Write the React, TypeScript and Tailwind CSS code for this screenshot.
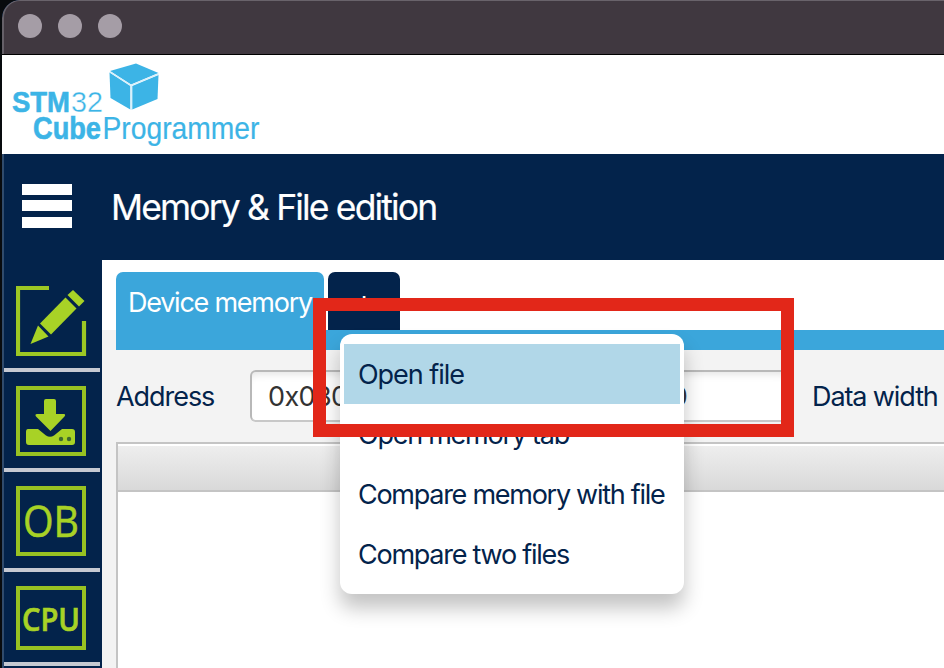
import React from "react";

const GREEN = "#a8d226";

function Frame({ children, height = 70 }: { children: React.ReactNode; height?: number }) {
  return (
    <svg width={70} height={height} viewBox={`0 0 70 ${height}`} className="block">
      <rect x={2} y={2} width={66} height={height - 4} fill="none" stroke="#98c222" strokeWidth={4} />
      {children}
    </svg>
  );
}

function EditIcon() {
  return (
    <svg width={72} height={70} viewBox="0 0 72 70" className="block">
      <path d="M33 2H2V68H68V35" fill="none" stroke="#9dc824" strokeWidth={4.2} />
      <path d="M57 4l11.5 11-5.5 5.5L51.500 9z" fill={GREEN} />
      <path d="M49.500 11.500L60.500 22.500 35 48.500 24 37.500z" fill={GREEN} />
      <path d="M22 39.500L32.500 50.500 14.500 58z" fill={GREEN} />
    </svg>
  );
}

function DownloadIcon() {
  return (
    <Frame>
      <path d="M30 13H38Q40 13 40 15V28H48Q50 28.500 48.500 30.500L34.500 45 20 30.500Q18.500 28 21 28H28V15Q28 13 30 13z" fill={GREEN} />
      <path d="M12 43H22L30 49.500Q34 52 38 49.500L46 43H56Q59 43 59 46V56Q59 59 56 59H13Q10 59 10 56V46Q10 43 12 43z" fill={GREEN} />
      <circle cx={45} cy={53} r={2.200} fill="#3f6a30" />
      <circle cx={53} cy={53} r={2.200} fill="#3f6a30" />
    </Frame>
  );
}

function Logo() {
  return (
    <svg width={262} height={98} viewBox="0 56 262 98" className="block">
      <g fill="#3cb4e6">
        <path d="M136 63.500L158.500 73 131 84.500 110 71z" />
        <path d="M109.500 72.500L130.300 86V109.500L110.500 98z" />
        <path d="M132.300 86L158.500 75 157.500 99 132.300 109.500z" />
      </g>
      <path d="M110 71.800L131 85.300 158.500 74M131.300 85V110" fill="none" stroke="#d9f0fb" strokeWidth={1.4} />
      <g fill="#3cb4e6" fontFamily="Liberation Sans, Arial, sans-serif">
        <text x={12} y={111.500} fontSize={29.500} fontWeight={700} textLength={58} lengthAdjust="spacingAndGlyphs" stroke="#3cb4e6" strokeWidth={0.6}>STM</text>
        <text x={71} y={111.500} fontSize={30} textLength={32} lengthAdjust="spacingAndGlyphs" stroke="#fff" strokeWidth={0.4}>32</text>
        <text x={33} y={139} fontSize={31} fontWeight={700} textLength={68} lengthAdjust="spacingAndGlyphs" stroke="#3cb4e6" strokeWidth={0.6}>Cube</text>
        <text x={102.500} y={139} fontSize={31.500} textLength={157} lengthAdjust="spacingAndGlyphs" stroke="#3cb4e6" strokeWidth={0.2}>Programmer</text>
      </g>
    </svg>
  );
}

function NavItem({ children, last = false }: { children: React.ReactNode; last?: boolean }) {
  return (
    <div className={`${last ? "h-[94px]" : "h-[100px]"} w-[96px] border-b-4 border-[#c5c9d2] pl-3 pt-[14px]`}>
      {children}
    </div>
  );
}

function Field({ value, className }: { value: string; className: string }) {
  return (
    <div
      className={`flex h-[52px] shrink-0 items-center rounded-[6px] border-2 border-[#b8b8b8] border-b-[#c8c8c8] bg-white pt-[2px] text-[#333] shadow-[inset_0_8px_8px_-6px_rgba(0,0,0,0.12)] ${className}`}
    >
      {value}
    </div>
  );
}

function MenuItem({ label, active = false, tracking }: { label: string; active?: boolean; tracking: string }) {
  return (
    <div className={`flex h-[60px] items-center whitespace-nowrap pl-[14px] pt-[2px] ${active ? "bg-[#b1d7e8]" : ""} ${tracking}`}>
      {label}
    </div>
  );
}

export default function App() {
  return (
    <div className="relative h-[668px] w-[944px] overflow-hidden bg-[#080b0e] pl-[2px] font-['Inter','Liberation_Sans',sans-serif] text-[27px] text-[#03234b]">
      <div className="flex h-full w-[942px] flex-col overflow-hidden rounded-tl-[18px] bg-[#03234b]">
        <header className="flex h-[54px] shrink-0 items-start gap-4 rounded-tl-[18px] border-l-2 border-t border-l-[#656068] border-t-[#69636b] bg-[#403840] pl-[14px] pt-[13px]">
          <span className="size-6 rounded-full bg-[#a59da6]" />
          <span className="size-6 rounded-full bg-[#a59da6]" />
          <span className="size-6 rounded-full bg-[#a59da6]" />
        </header>
        <div className="h-[100px] shrink-0 border-t border-black bg-white pt-px">
          <div className="-ml-[2px]"><Logo /></div>
        </div>
        <div className="flex h-[106px] shrink-0 items-start border-l-2 border-[#304b6c] pl-[18px] pt-[30px] text-white">
          <div className="flex h-11 w-[50px] flex-col justify-between">
            <span className="h-[10.5px] bg-white" />
            <span className="h-[11px] bg-white" />
            <span className="h-[11px] bg-white" />
          </div>
          <h1 className="ml-[39px] whitespace-nowrap text-[35.5px] leading-[47px] tracking-[-1.85px] [-webkit-text-stroke:0.2px_white]">Memory &amp; File edition</h1>
        </div>
        <div className="flex h-[408px] shrink-0">
          <nav className="w-[100px] shrink-0 border-l-2 border-[#304b6c] pt-3">
            <NavItem><EditIcon /></NavItem>
            <NavItem><DownloadIcon /></NavItem>
            <NavItem>
              <Frame>
                <text x={7} y={51} fontSize={43} fontFamily="Open Sans, sans-serif" fill={GREEN} stroke={GREEN} strokeWidth={0.6} textLength={56} lengthAdjust="spacingAndGlyphs">OB</text>
              </Frame>
            </NavItem>
            <NavItem last>
              <Frame height={64}>
                <text x={6} y={44.500} fontSize={33} fontWeight={600} fontFamily="Open Sans, sans-serif" fill={GREEN} stroke={GREEN} strokeWidth={0.7} textLength={58} lengthAdjust="spacingAndGlyphs">CPU</text>
              </Frame>
            </NavItem>
          </nav>
          <main className="flex w-[842px] flex-col bg-[#f3f3f3]">
            <div className="flex h-[70px] shrink-0 items-start gap-1 bg-white pl-[14px] pt-3">
              <div className="h-[58px] w-[208px] whitespace-nowrap rounded-t-[7px] bg-[#3ba6db] pl-3 pt-[11px] leading-[40px] tracking-[-1.25px] text-white">Device memory</div>
              <div className="h-[58px] w-[72px] rounded-t-[7px] bg-[#03234b] pt-[9px] text-center text-[29px] leading-[40px] text-white">+</div>
            </div>
            <div className="ml-[14px] h-5 shrink-0 bg-[#3ba6db]" />
            <div className="flex h-[92px] shrink-0 items-center whitespace-nowrap pl-[14px]">
              <span className="w-[134px] shrink-0 pt-[2px] tracking-[-1.05px]">Address</span>
              <Field value="0x08000000" className="w-[210px] pl-4 tracking-[-0.6px]" />
              <span className="w-[90px] shrink-0 pl-5 pt-[2px]">Size</span>
              <Field value="0x400" className="w-[238px] pl-[55px] tracking-[-0.6px]" />
              <span className="ml-[24px] pt-[2px] tracking-[-1.1px]">Data width</span>
            </div>
            <div className="ml-[14px] flex-1 border-l-2 border-t-2 border-[#c4c4c4] bg-white">
              <div className="h-[48px] border-b-2 border-t-2 border-b-[#c4c4c4] border-t-white bg-linear-to-b from-[#eeeeee] to-[#d9d9d9]" />
            </div>
          </main>
        </div>
      </div>
      <div className="absolute left-[340px] top-[334px] h-[260px] w-[344px] rounded-[12px] bg-white px-1 pt-[10px] shadow-[0_14px_20px_rgba(0,0,0,0.24)]">
        <MenuItem label="Open file" active tracking="tracking-[-1.05px]" />
        <MenuItem label="Open memory tab" tracking="tracking-[-1.25px]" />
        <MenuItem label="Compare memory with file" tracking="tracking-[-1.27px]" />
        <MenuItem label="Compare two files" tracking="tracking-[-1.25px]" />
      </div>
      <div className="absolute left-[312.500px] top-[297.500px] h-[139px] w-[481.500px] border-[13px] border-[#e22719]" />
    </div>
  );
}
